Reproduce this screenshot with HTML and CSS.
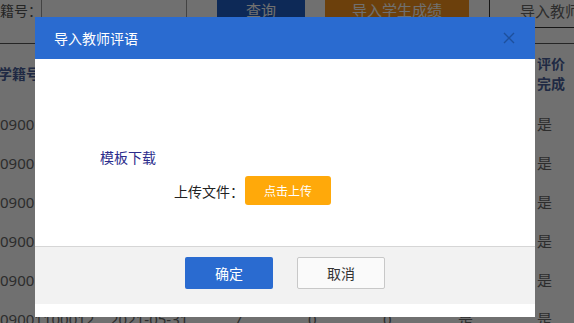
FILE: index.html
```html
<!DOCTYPE html>
<html lang="zh-CN">
<head>
    <meta charset="UTF-8">
    <meta name="viewport" content="width=device-width, initial-scale=1.0">
    <title>导入教师评语</title>
    <link rel="stylesheet" href="styles.css">
</head>
<body>
    <div class="page">
        <div class="toolbar">
            <span class="label">籍号：</span>
            <span class="search-input"></span>
            <button class="tool-btn btn-query">查询</button>
            <button class="tool-btn btn-import">导入学生成绩</button>
            <span class="tool-outline">导入教师评语</span>
        </div>

        <div class="table">
            <div class="row head">
                <span>学籍号</span>
                <span>日期</span>
                <span>次数</span>
                <span>未评</span>
                <span>未读</span>
                <span>已提交</span>
                <span>评价<br>完成</span>
            </div>
            <div class="row"><span>09001100012</span><span>2021-05-31</span><span>7</span><span>0</span><span>0</span><span>是</span><span>是</span></div>
            <div class="row"><span>09001100012</span><span>2021-05-31</span><span>7</span><span>0</span><span>0</span><span>是</span><span>是</span></div>
            <div class="row"><span>09001100012</span><span>2021-05-31</span><span>7</span><span>0</span><span>0</span><span>是</span><span>是</span></div>
            <div class="row"><span>09001100012</span><span>2021-05-31</span><span>7</span><span>0</span><span>0</span><span>是</span><span>是</span></div>
            <div class="row"><span>09001100012</span><span>2021-05-31</span><span>7</span><span>0</span><span>0</span><span>是</span><span>是</span></div>
            <div class="row"><span>09001100012</span><span>2021-05-31</span><span>7</span><span>0</span><span>0</span><span>是</span><span>是</span></div>
        </div>
    </div>

    <div class="mask"></div>

    <div class="modal">
        <div class="modal-header">
            <span class="modal-title">导入教师评语</span>
            <svg class="modal-close" width="12" height="12" viewBox="0 0 12 12">
                <path d="M1 1 L11 11 M11 1 L1 11" stroke="#1d4f9c" stroke-width="1.4" fill="none"/>
            </svg>
        </div>
        <div class="modal-body">
            <a class="template-link" href="#">模板下载</a>
            <div class="upload-row">
                <span class="upload-label">上传文件：</span>
                <button class="upload-btn">点击上传</button>
            </div>
        </div>
        <div class="modal-footer">
            <button class="btn-ok">确定</button>
            <button class="btn-cancel">取消</button>
        </div>
    </div>
</body>
</html>
```

FILE: styles.css
```css
body {
    margin: 0;
    background-color: #fff;
    font-family: "Noto Sans", "Noto Sans CJK SC", sans-serif;
    overflow: hidden;
}

.page {
    width: 574px;
    overflow: hidden;
}

.toolbar {
    display: flex;
    align-items: flex-start;
    height: 54px;
    margin-top: -10px;
    border-bottom: 1px solid #555;
    box-sizing: border-box;
    overflow: hidden;
}
.toolbar > * {
    flex-shrink: 0;
}
.label {
    width: 41px;
    padding-top: 11px;
    font-size: 14px;
    line-height: 20px;
    color: #555;
    white-space: nowrap;
}
.search-input {
    width: 146px;
    height: 40px;
    border-left: 1px solid #999;
    border-right: 1px solid #999;
    box-sizing: border-box;
}
.tool-btn {
    height: 40px;
    padding: 0;
    border: none;
    font-family: inherit;
    font-size: 15px;
    color: #fff;
    line-height: 40px;
}
.btn-query {
    width: 88px;
    margin-left: 30px;
    background-color: #1f5fc6;
}
.btn-import {
    width: 144px;
    margin-left: 20px;
    background-color: #f5931c;
}
.tool-outline {
    margin-left: 20px;
    width: 100px;
    height: 37px;
    padding-left: 30px;
    border-left: 1px solid #333;
    border-bottom: 1px solid #333;
    font-size: 15px;
    line-height: 42px;
    color: #666;
    white-space: nowrap;
}

.row {
    display: grid;
    grid-template-columns: 110px 124px 74px 75px 75px 79px 1fr;
    height: 39px;
    align-items: center;
    font-size: 15px;
    color: #666;
}
.row span {
    white-space: nowrap;
}
.row.head {
    height: 60px;
    font-size: 14px;
    font-weight: bold;
    color: #4a5f99;
    line-height: 20px;
}
.row.head span:first-child {
    margin-left: -2px;
}

.mask {
    position: fixed;
    inset: 0;
    background-color: rgba(0, 0, 0, 0.56);
}

.modal {
    position: fixed;
    left: 35px;
    top: 17px;
    width: 500px;
    height: 300px;
    background-color: #fff;
    display: flex;
    flex-direction: column;
}
.modal-header {
    height: 42px;
    background-color: #2a6bd0;
    display: flex;
    align-items: center;
    justify-content: space-between;
    padding: 0 20px 0 19px;
}
.modal-title {
    font-size: 14px;
    color: #fff;
}
.modal-body {
    height: 187px;
    padding: 89px 0 0 65px;
    box-sizing: border-box;
}
.template-link {
    display: block;
    font-size: 14px;
    line-height: 20px;
    color: #2c2c8c;
    text-decoration: none;
}
.upload-row {
    display: flex;
    align-items: center;
    margin-top: 8px;
    padding-left: 74px;
}
.upload-label {
    font-size: 14px;
    color: #222;
    margin-right: 1px;
}
.upload-btn {
    width: 86px;
    height: 29px;
    border: none;
    border-radius: 3px;
    background-color: #ffa90a;
    color: #fff;
    font-family: inherit;
    font-size: 12px;
}
.modal-footer {
    height: 58px;
    border-top: 1px solid #d6d6d6;
    background-color: #f2f2f2;
    box-sizing: border-box;
    display: flex;
    justify-content: center;
    gap: 24px;
    padding-top: 10px;
}
.btn-ok,
.btn-cancel {
    width: 88px;
    height: 32px;
    border-radius: 2px;
    font-family: inherit;
    font-size: 14px;
    cursor: pointer;
}
.btn-ok {
    border: none;
    background-color: #2a6bd0;
    color: #fff;
}
.btn-cancel {
    border: 1px solid #c8c8c8;
    background-color: #fafafa;
    color: #333;
}
```
